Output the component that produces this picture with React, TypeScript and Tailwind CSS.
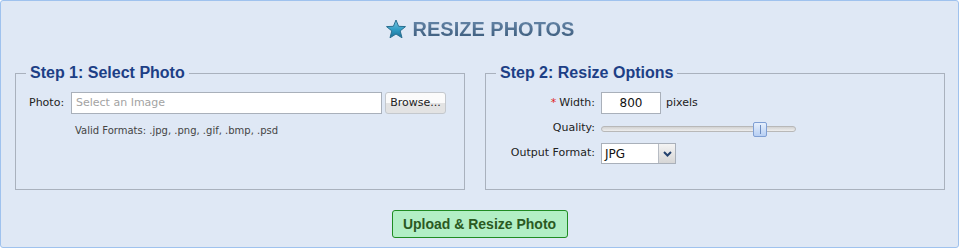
import React from "react";

const body = { fontFamily: '"DejaVu Sans", Verdana, sans-serif' };
const arial = { fontFamily: '"Liberation Sans", Arial, sans-serif' };

function Star() {
  return (
    <svg width="22" height="20" viewBox="0 0 22 20" className="mr-[6px]">
      <defs>
        <linearGradient id="starFill" x1="0" y1="0" x2="0" y2="1">
          <stop offset="0" stopColor="#7cc8e4" />
          <stop offset="0.55" stopColor="#2f9cc4" />
          <stop offset="1" stopColor="#1b6f95" />
        </linearGradient>
      </defs>
      <path
        d="M11 1 L13.6 7.3 L20.5 7.6 L15.2 11.9 L17 18.8 L11 15 L5 18.8 L6.8 11.9 L1.5 7.6 L8.4 7.3 Z"
        fill="url(#starFill)"
        stroke="#2a6f90"
        strokeWidth="1"
        strokeLinejoin="round"
      />
    </svg>
  );
}

function Legend({ children }: { children: React.ReactNode }) {
  return (
    <legend
      className="ml-[10px] px-[4px] text-[16px] leading-[18px] font-bold text-[#1d3f86]"
      style={arial}
    >
      {children}
    </legend>
  );
}

export default function App() {
  return (
    <div
      className="w-[959px] h-[248px] bg-[#dfe8f5] border border-[#9fc2ee] rounded-[3px] flex flex-col items-center"
      style={body}
    >
      <h1 className="mt-[16px] h-[24px] flex items-center">
        <Star />
        <span
          className="text-[20px] leading-[24px] font-bold bg-linear-to-b from-[#6d8daf] to-[#375777] bg-clip-text text-transparent"
          style={arial}
        >
          RESIZE PHOTOS
        </span>
      </h1>

      <div className="mt-[23px] w-full pl-[14px] flex gap-[20px]">
        <fieldset className="w-[450px] h-[126px] border border-[#a9b1bd]">
          <Legend>Step 1: Select Photo</Legend>
          <div className="pl-[13px] pt-[10px]">
            <div className="flex items-center h-[22px]">
              <label className="text-[11px] text-[#222] w-[42px]">Photo:</label>
              <div className="w-[311px] h-[22px] bg-white border border-[#a9b0ba] flex items-center pl-[4px] text-[11px] text-[#a3a3a3]">
                Select an Image
              </div>
              <button className="ml-[3px] w-[61px] h-[22px] rounded-[3px] border border-[#c4c8cd] bg-linear-to-b from-[#fbfbfb] from-50% to-[#e3e3e3] to-50% text-[11px] text-[#222]">
                Browse...
              </button>
            </div>
            <p className="mt-[9px] ml-[46px] text-[10px] text-[#444]">
              Valid Formats: .jpg, .png, .gif, .bmp, .psd
            </p>
          </div>
        </fieldset>

        <fieldset className="w-[460px] h-[126px] border border-[#a9b1bd]">
          <Legend>Step 2: Resize Options</Legend>
          <div className="pt-[10px] grid grid-cols-[109px_auto] grid-rows-[22px_21px_21px] gap-x-[6px] gap-y-[4px] items-center text-[11px] text-[#222]">
            <label className="text-right">
              <span className="text-[#e02020] mr-[3px]">*</span>Width:
            </label>
            <div className="flex items-center">
              <div className="w-[60px] h-[22px] bg-white border border-[#a9b0ba] flex items-center justify-center text-[12px] text-[#111]">
                800
              </div>
              <span className="ml-[5px]">pixels</span>
            </div>

            <label className="text-right">Quality:</label>
            <div className="relative w-[195px] h-[6px] rounded-full border border-[#b8b8b8] bg-linear-to-b from-[#d2d2d2] to-[#eeeeee]">
              <div className="absolute left-[151px] top-[-5px] w-[14px] h-[15px] rounded-[2px] border border-[#7f9fd4] bg-linear-to-b from-[#e6effc] to-[#b7cff3] flex justify-center items-center">
                <div className="w-[1px] h-[9px] bg-[#6d8cc0]" />
              </div>
            </div>

            <label className="text-right">Output Format:</label>
            <div className="w-[75px] h-[21px] bg-white border border-[#a9b0ba] flex">
              <span className="flex-1 flex items-center pl-[3px] text-[12px] text-[#111]">JPG</span>
              <span className="w-[17px] border-l border-[#b7bcc4] bg-linear-to-b from-[#f4f4f4] to-[#d6d6d6] flex items-center justify-center">
                <svg width="9" height="6" viewBox="0 0 9 6">
                  <path d="M1 1 L4.5 4.5 L8 1" fill="none" stroke="#24426e" strokeWidth="2" />
                </svg>
              </span>
            </div>
          </div>
        </fieldset>
      </div>

      <button
        className="mt-[20px] w-[176px] h-[28px] rounded-[3px] border border-[#1f8c22] bg-[#b2efc5] text-[14px] font-bold text-[#2a5a22]"
        style={arial}
      >
        Upload &amp; Resize Photo
      </button>
    </div>
  );
}
